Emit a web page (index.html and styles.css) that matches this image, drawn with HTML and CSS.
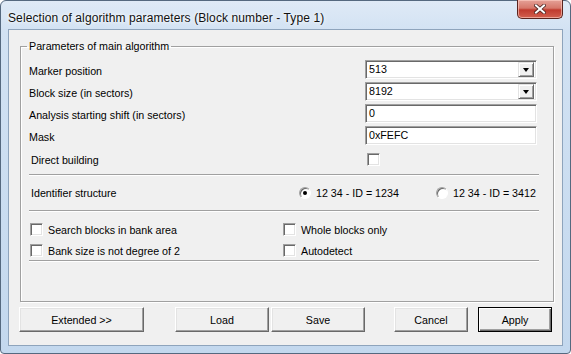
FILE: index.html
```html
<!DOCTYPE html>
<html lang="en">
<head>
    <meta charset="UTF-8">
    <title>Selection of algorithm parameters</title>
    <link rel="stylesheet" href="styles.css">
</head>
<body>
    <div class="window">
        <div class="titlebar">
            <span class="title">Selection of algorithm parameters (Block number - Type 1)</span>
            <span class="close">
                <svg width="12" height="10" viewBox="0 0 12 10">
                    <path d="M2 1.5 L10 8.5 M10 1.5 L2 8.5" stroke="#4a2320" stroke-width="3.6" stroke-linecap="square"/>
                    <path d="M2 1.5 L10 8.5 M10 1.5 L2 8.5" stroke="#ffffff" stroke-width="2" stroke-linecap="square"/>
                </svg>
            </span>
        </div>
        <div class="client">
            <fieldset class="group">
                <legend>Parameters of main algorithm</legend>

                <div class="params">
                    <label>Marker position</label>
                    <div class="field combo"><span>513</span><span class="drop"></span></div>

                    <label>Block size (in sectors)</label>
                    <div class="field combo"><span>8192</span><span class="drop"></span></div>

                    <label>Analysis starting shift (in sectors)</label>
                    <div class="field"><span>0</span></div>

                    <label>Mask</label>
                    <div class="field"><span>0xFEFC</span></div>
                </div>

                <div class="direct">
                    <span class="direct-label">Direct building</span>
                    <span class="check"></span>
                </div>

                <div class="sep"></div>

                <div class="ident">
                    <span class="ident-label">Identifier structure</span>
                    <span class="option"><span class="radio checked"></span>12 34 - ID = 1234</span>
                    <span class="option"><span class="radio"></span>12 34 - ID = 3412</span>
                </div>

                <div class="sep sep-ident"></div>

                <div class="opts">
                    <span class="option"><span class="check"></span>Search blocks in bank area</span>
                    <span class="option"><span class="check"></span>Whole blocks only</span>
                    <span class="option"><span class="check"></span>Bank size is not degree of 2</span>
                    <span class="option"><span class="check"></span>Autodetect</span>
                </div>

                <div class="sep sep-opts"></div>
            </fieldset>

            <div class="buttons">
                <button class="btn btn-extended">Extended &gt;&gt;</button>
                <button class="btn btn-load">Load</button>
                <button class="btn btn-save">Save</button>
                <button class="btn btn-cancel">Cancel</button>
                <button class="btn btn-apply">Apply</button>
            </div>
        </div>
    </div>
</body>
</html>
```

FILE: styles.css
```css
body {
    margin: 0;
    font-family: 'Liberation Sans', Tahoma, sans-serif;
    font-size: 10.7px;
    color: #000;
    background: #ffffff;
}
.window {
    width: 571px;
    height: 354px;
    box-sizing: border-box;
    border: 1px solid #55697f;
    border-radius: 6px 6px 4px 4px;
    background: linear-gradient(to bottom, #dfeaf6 0px, #d2e2f3 30px, #c3d8ee 100%);
    display: flex;
    flex-direction: column;
}
.titlebar {
    height: 28px;
    display: flex;
    justify-content: space-between;
    align-items: flex-start;
    padding: 0 7px 0 7px;
}
.title {
    font-size: 12px;
    letter-spacing: 0.1px;
    margin-top: 10px;
    color: #111;
    text-shadow: 0 0 6px #ffffff, 0 0 3px #ffffff;
}
.close {
    width: 44px;
    height: 18px;
    margin-top: -1px;
    border: 1px solid #5a241e;
    border-top: none;
    border-radius: 0 0 5px 5px;
    background: linear-gradient(to bottom, #e5a197 0%, #d6786b 45%, #c03b2e 55%, #d2604f 100%);
    box-shadow: inset 0 0 0 1px rgba(255, 210, 200, 0.6);
    display: flex;
    align-items: center;
    justify-content: center;
}
.client {
    flex: 1;
    margin: 0 7px 7px 7px;
    border: 1px solid #8ea4bc;
    background: #f0f0f0;
    display: flex;
    flex-direction: column;
}
.group {
    margin: 10px 8px 0 11px;
    padding: 0 14px 39px 8px;
    border: 1px solid #a0a0a0;
    box-shadow: inset 1px 1px 0 #ffffff, 1px 1px 0 #ffffff;
}
.group legend {
    padding: 0 2px;
    margin-left: -2px;
    line-height: 13px;
}
.params {
    margin-top: 6px;
    display: grid;
    grid-template-columns: 1fr 172px;
    grid-auto-rows: 20px;
    row-gap: 2px;
    margin-right: 2px;
    align-items: center;
}
.params label {
    padding-top: 3px;
}
.field {
    height: 19px;
    box-sizing: border-box;
    background: #ffffff;
    border: 1px solid;
    border-color: #a0a0a0 #ffffff #ffffff #a0a0a0;
    box-shadow: inset 1px 1px 0 #696969, inset -1px -1px 0 #e3e3e3;
    display: flex;
    align-items: center;
    padding-left: 3px;
}
.field span:first-child {
    flex: 1;
}
.combo {
    padding-right: 2px;
}
.drop {
    width: 16px;
    height: 15px;
    box-sizing: border-box;
    background: #f0f0f0;
    border: 1px solid;
    border-color: #e3e3e3 #696969 #696969 #e3e3e3;
    box-shadow: inset 1px 1px 0 #ffffff, inset -1px -1px 0 #a0a0a0;
    position: relative;
}
.drop::after {
    content: "";
    position: absolute;
    left: 4px;
    top: 5px;
    border-left: 3.5px solid transparent;
    border-right: 3.5px solid transparent;
    border-top: 4px solid #000;
}
.check {
    width: 13px;
    height: 13px;
    box-sizing: border-box;
    background: #ffffff;
    border: 1px solid;
    border-color: #a0a0a0 #ffffff #ffffff #a0a0a0;
    box-shadow: inset 1px 1px 0 #696969, inset -1px -1px 0 #e3e3e3;
    flex: none;
}
.direct {
    margin-top: 6px;
    height: 17px;
    display: grid;
    grid-template-columns: 1fr 172px;
    align-items: center;
}
.direct-label {
    padding-left: 2px;
}
.sep {
    height: 1px;
    border-bottom: 1px solid #ffffff;
    background: #a0a0a0;
    margin-top: 6px;
}
.ident {
    margin-top: 8px;
    height: 18px;
    display: grid;
    grid-template-columns: 270px 137px 1fr;
    align-items: center;
}
.ident-label {
    padding-left: 2px;
}
.option {
    display: flex;
    align-items: center;
    white-space: nowrap;
}
.radio {
    width: 12px;
    height: 12px;
    box-sizing: border-box;
    border-radius: 50%;
    background: #ffffff;
    border: 1px solid;
    border-color: #a0a0a0 #ffffff #ffffff #a0a0a0;
    box-shadow: inset 1px 1px 0 #696969;
    margin-right: 5px;
    position: relative;
}
.radio.checked::after {
    content: "";
    position: absolute;
    left: 3px;
    top: 3px;
    width: 4px;
    height: 4px;
    border-radius: 50%;
    background: #000;
}
.sep-ident {
    margin-top: 8px;
}
.opts {
    margin-top: 9px;
    display: grid;
    grid-template-columns: 253px 1fr;
    grid-auto-rows: 17px;
    row-gap: 4px;
    align-items: center;
}
.opts .check {
    margin: 0 5px 0 1px;
}
.sep-opts {
    margin-top: 1px;
}
.buttons {
    display: flex;
    margin-top: 5px;
    padding-left: 10px;
}
.btn {
    height: 25px;
    box-sizing: border-box;
    font-family: inherit;
    font-size: 10.7px;
    color: #000;
    background: #f0f0f0;
    border: 1px solid;
    border-color: #ffffff #696969 #696969 #ffffff;
    box-shadow: inset -1px -1px 0 #a0a0a0, inset 1px 1px 0 #e3e3e3;
    padding: 0;
}
.btn-extended {
    width: 125px;
}
.btn-load {
    width: 94px;
    margin-left: 31px;
}
.btn-save {
    width: 94px;
    margin-left: 2px;
}
.btn-cancel {
    width: 74px;
    margin-left: 29px;
}
.btn-apply {
    width: 74px;
    margin-left: 10px;
    border-color: #000;
    box-shadow: inset 1px 1px 0 #ffffff, inset -1px -1px 0 #696969, inset -2px -2px 0 #a0a0a0;
}
```
